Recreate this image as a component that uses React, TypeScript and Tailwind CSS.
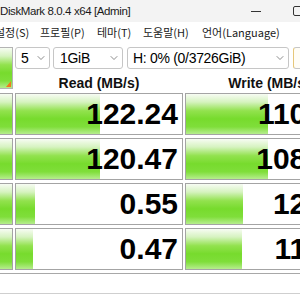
import { ChevronDown } from 'lucide-react'

const BAR =
  'bg-[linear-gradient(to_bottom,#f7fcf3_0%,#d6f3c0_20%,#92e24e_42%,#77db2d_62%,#7fde3a_82%,#b6ed8e_100%)]'

interface Result {
  read: string
  readBar: number
  write: string
  writeBar: number
}

const results: Result[] = [
  { read: '122.24', readBar: 84, write: '110.86', writeBar: 82 },
  { read: '120.47', readBar: 84, write: '108.93', writeBar: 82 },
  { read: '0.55', readBar: 19, write: '12.04', writeBar: 57 },
  { read: '0.47', readBar: 17, write: '11.48', writeBar: 56 },
]

const menus = [
  { label: '설정(S)', w: 'w-[45px]' },
  { label: '프로필(P)', w: 'w-[57px]' },
  { label: '테마(T)', w: 'w-[46px]' },
  { label: '도움말(H)', w: 'w-[59px]' },
  { label: '언어(Language)', w: 'w-[90px]' },
]

function Select({ label, className }: { label: string; className: string }) {
  return (
    <div
      className={`flex h-[22px] shrink-0 items-center justify-between rounded-[3px] border border-[#c6c6c6] bg-white pr-[2px] ${className}`}
    >
      <span className="text-[14px] leading-none tracking-[-0.3px] text-black">{label}</span>
      <ChevronDown size={12} strokeWidth={1.4} className="text-[#5a5a5a]" />
    </div>
  )
}

function Meter({ value, bar }: { value: string; bar: number }) {
  return (
    <div className="relative h-[42px] w-[168px] shrink-0 border border-[#a4a4a4] bg-white">
      <div className={`absolute inset-y-0 left-0 ${BAR}`} style={{ width: bar }} />
      <div className="relative flex h-full items-center justify-end pr-[4px] text-[30px] font-bold leading-none text-black">
        {value}
      </div>
    </div>
  )
}

export default function App() {
  return (
    <div className="h-[300px] w-[300px] overflow-hidden bg-white font-['Liberation_Sans',sans-serif] text-black">
      {/* title bar */}
      <div className="flex h-[22px] items-center bg-[#f3f3f3]">
        <span className="text-[11.5px] leading-[13px] tracking-[-0.4px] text-[#1a1a1a]">
          DiskMark 8.0.4 x64 [Admin]
        </span>
        <div className="ml-auto mr-[-3px] flex items-center gap-[32px]">
          <div className="h-px w-[10px] bg-[#333]" />
          <div className="h-[10px] w-[10px] rounded-[2px] border border-[#333]" />
        </div>
      </div>

      {/* menu */}
      <div className="flex h-[20px] items-center ml-[-5px] font-['Noto_Sans_CJK_KR',sans-serif] text-[11px] leading-none text-[#1a1a1a]">
        {menus.map((m) => (
          <span key={m.label} className={`shrink-0 ${m.w}`}>
            {m.label}
          </span>
        ))}
      </div>

      <div className="flex flex-col gap-[3px] pt-[5px]">
        {/* controls + header */}
        <div className="flex h-[43px] gap-[2px]">
          <div className={`relative h-[42px] w-[13px] shrink-0 border-y border-r border-[#b4b4b4] ${BAR}`}>
            <svg className="absolute bottom-[1px] right-[1px]" width="5" height="6" viewBox="0 0 5 6">
              <polygon points="5,0 5,6 0,6" fill="#f07a1c" />
            </svg>
          </div>
          <div className="flex flex-col">
            <div className="flex h-[22px] items-center">
              <Select label="5" className="w-[35px] pl-[5px]" />
              <Select label="1GiB" className="ml-[3px] w-[70px] pl-[6px]" />
              <Select label="H: 0% (0/3726GiB)" className="ml-[4px] w-[162px] pl-[5px]" />
              <div className="ml-[4px] h-[22px] w-[20px] shrink-0 rounded-l-[3px] border border-[#c6c6c6] border-l-[#e6c779] bg-[#fffdf6]" />
            </div>
            <div className="flex gap-[2px] pt-[6px] text-[14px] font-bold leading-[17px] text-[#111]">
              <div className="w-[168px] shrink-0 text-center">Read (MB/s)</div>
              <div className="w-[168px] shrink-0 text-center">Write (MB/s)</div>
            </div>
          </div>
        </div>

        {/* results */}
        {results.map((r) => (
          <div key={r.read} className="flex gap-[2px]">
            <div className={`h-[42px] w-[13px] shrink-0 border-y border-r border-[#a4a4a4] ${BAR}`} />
            <Meter value={r.read} bar={r.readBar} />
            <Meter value={r.write} bar={r.writeBar} />
          </div>
        ))}

        {/* comment */}
        <div className="ml-[-1px] h-[21px] w-[302px] border border-[#a8a8a8] border-b-[#cfcfcf] bg-white" />
      </div>
    </div>
  )
}
